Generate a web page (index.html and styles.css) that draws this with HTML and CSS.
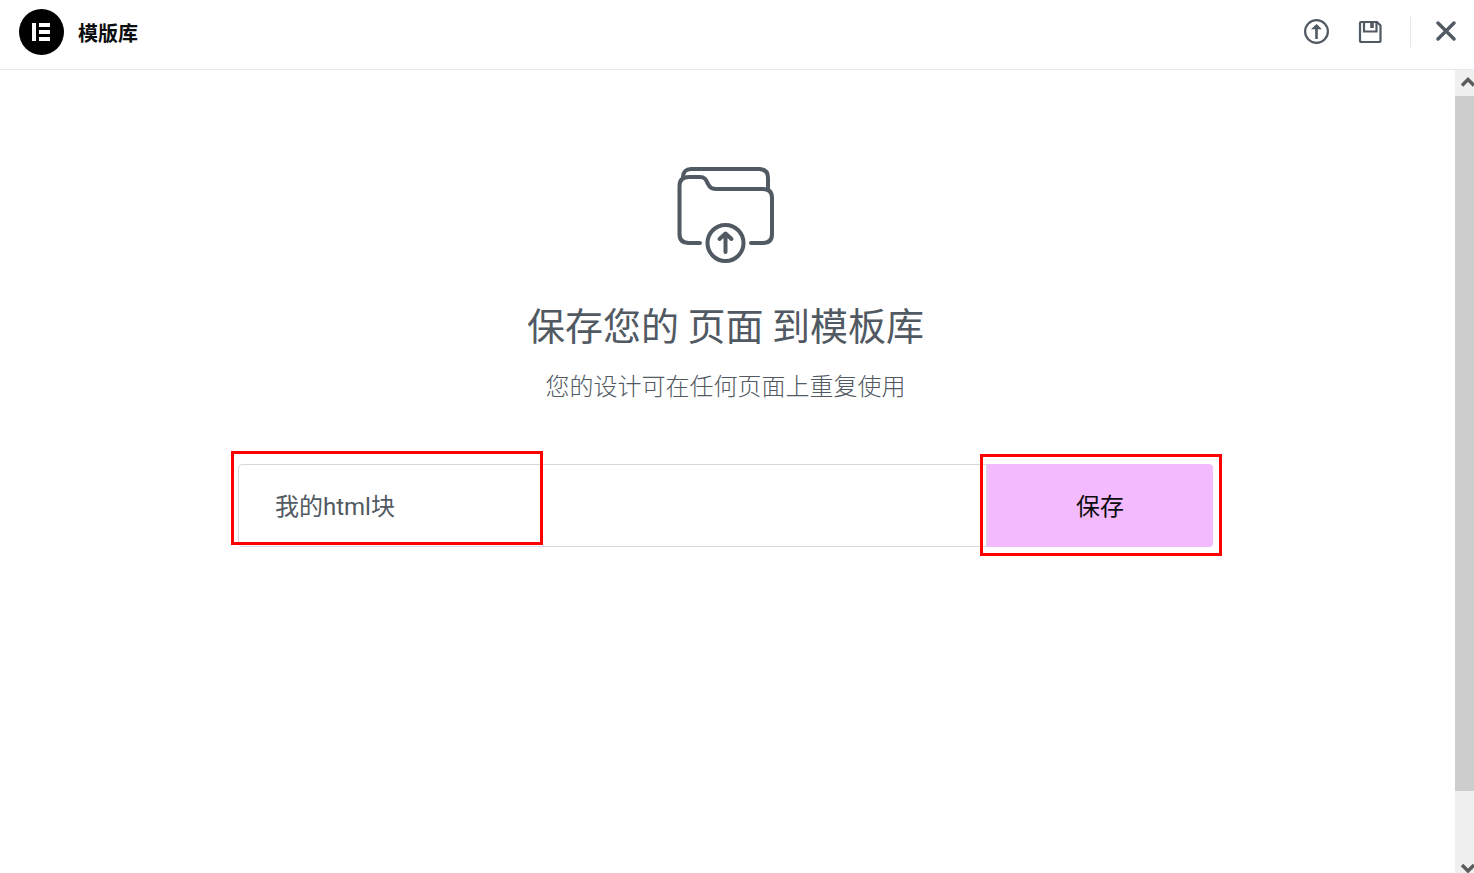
FILE: index.html
```html
<!DOCTYPE html>
<html lang="zh-CN">
<head>
<meta charset="utf-8">
<title>模版库</title>
<meta name="viewport" content="width=device-width, initial-scale=1">
<link rel="stylesheet" href="styles.css">
</head>
<body>
<header class="header">
  <div class="brand">
    <svg class="brand-logo" viewBox="0 0 45 46" aria-hidden="true">
      <ellipse cx="22.5" cy="23" rx="22.5" ry="23" fill="#000"/>
      <path fill="#fff" d="M13 14h4v18h-4zM20 14h11v4H20zM20 21h11v4H20zM20 28h11v4H20z"/>
    </svg>
    <h1 class="brand-title">模版库</h1>
  </div>
  <div class="actions">
    <button class="icon-button" type="button" aria-label="导入模板">
      <svg width="26" height="26" viewBox="0 0 26 26" fill="none" stroke="currentColor" stroke-width="2.2">
        <circle cx="12.5" cy="12.5" r="11.4"/>
        <path d="M12.5 20V7" stroke-width="2.6"/>
        <path d="M7 10.3 12.5 5l5.500 5.300z" fill="currentColor" stroke="none"/>
      </svg>
    </button>
    <button class="icon-button" type="button" aria-label="保存模板">
      <svg width="24" height="24" viewBox="0 0 24 24" fill="none" stroke="currentColor" stroke-width="2.2">
        <path d="M3 2H19L22.500 5.500V20.500Q22.500 22 21 22H3.500Q2 22 2 20.500V3Q2 2 3 2Z"/>
        <path d="M6 2V11.500H18.500V2"/>
        <path d="M14 2V8" stroke-width="3.600"/>
      </svg>
    </button>
    <button class="icon-button close-button" type="button" aria-label="关闭">
      <svg width="20" height="20" viewBox="0 0 20 20" fill="none" stroke="currentColor" stroke-width="3.400" stroke-linecap="round">
        <path d="M2 2 18 18M18 2 2 18"/>
      </svg>
    </button>
  </div>
</header>
<div class="body">
  <main class="content">
    <svg class="folder" width="98" height="98" viewBox="0 0 98 98" fill="none" stroke="currentColor" stroke-width="4" stroke-linecap="round" stroke-linejoin="round" aria-hidden="true">
      <path d="M6 11C6 6 9 3 14 3H82Q91 3 91 12V24"/>
      <path d="M23 77H12Q2.500 77 2.500 68V20Q2.500 11 12 11H23C28 11 29 14 31 18C33 22 35 23 40 23H86Q95 23 95 32V68Q95 77 86 77H74"/>
      <circle cx="48.500" cy="77" r="18"/>
      <path d="M48.500 86V68M42.500 73 48.500 67.500 54.500 73"/>
    </svg>
    <h2 class="title">保存您的 页面 到模板库</h2>
    <p class="subtitle">您的设计可在任何页面上重复使用</p>
    <form class="save-form">
      <input class="name-input" type="text" value="我的html块" aria-label="模板名称">
      <button class="save-button" type="button">保存</button>
      <span class="mark mark-name"></span>
      <span class="mark mark-save"></span>
    </form>
  </main>
  <div class="scrollbar" aria-hidden="true">
    <svg class="scroll-arrow" width="26" height="26" viewBox="0 0 26 26" fill="none" stroke="#5c5c5c" stroke-width="3.400"><path d="M7 15.500 13 9.500l6 6"/></svg>
    <div class="thumb"></div>
    <svg class="scroll-arrow" width="26" height="14" viewBox="0 0 26 14" fill="none" stroke="#5c5c5c" stroke-width="3.400"><path d="M7 6 13 12l6-6"/></svg>
  </div>
</div>
</body>
</html>
```
FILE: styles.css
```css
* {
  box-sizing: border-box;
}

body {
  margin: 0;
  min-height: 100vh;
  display: flex;
  flex-direction: column;
  overflow: hidden;
  background: #fff;
  color: #515962;
  font-family: Roboto, "Noto Sans CJK SC", sans-serif;
}

button,
input {
  font: inherit;
  color: inherit;
}

h1,
h2,
p {
  margin: 0;
}

.header {
  display: flex;
  justify-content: space-between;
  height: 70px;
  padding: 9px 18px 0 19px;
  border-bottom: 1px solid #e6e8ea;
}

.brand {
  display: flex;
  align-items: center;
  gap: 14px;
  height: 46px;
}

.brand-logo {
  width: 45px;
  height: 46px;
}

.brand-title {
  padding-top: 4px;
  color: #0c0d0e;
  font-size: 20px;
  line-height: 28px;
  font-weight: 700;
}

.actions {
  display: flex;
  align-items: center;
  gap: 28px;
  height: 46px;
}

.icon-button {
  display: flex;
  padding: 0;
  border: 0;
  background: none;
}

.close-button {
  align-items: center;
  height: 30px;
  padding: 0 0 2px 25px;
  border-left: 1px solid #e6e8ea;
}

.body {
  flex: 1;
  display: flex;
}

.content {
  flex: 1;
  display: flex;
  flex-direction: column;
  align-items: center;
  padding: 96px 242px 0 238px;
}

.title {
  margin-top: 32px;
  font-family: "Noto Sans CJK SC", sans-serif;
  font-size: 38px;
  line-height: 56px;
  font-weight: 400;
}

.subtitle {
  margin-top: 17px;
  font-size: 24px;
  line-height: 36px;
  font-weight: 300;
}

.save-form {
  position: relative;
  display: flex;
  width: 100%;
  height: 83px;
  margin-top: 59px;
  font-size: 24px;
}

.name-input {
  flex: 1;
  min-width: 0;
  padding: 0 36px 2px;
  border: 1px solid #d5d8dc;
  border-radius: 4px 0 0 4px;
  background: #fff;
}

.save-button {
  width: 226px;
  padding: 0 0 2px;
  border: 0;
  border-radius: 0 4px 4px 0;
  background: #f3bafd;
  color: #0c0d0e;
}

.mark {
  position: absolute;
  border: 3px solid #f00;
  pointer-events: none;
}

.mark-name {
  top: -13px;
  left: -7px;
  width: 312px;
  height: 94px;
}

.mark-save {
  top: -10px;
  right: -9px;
  width: 242px;
  height: 102px;
}

.scrollbar {
  display: flex;
  flex-direction: column;
  justify-content: space-between;
  width: 19px;
  overflow: hidden;
  background: #f0f0f0;
}

.scroll-arrow {
  flex: none;
}

.thumb {
  flex: 0 0 auto;
  height: calc(100vh - 178px);
  margin-bottom: auto;
  background: #cdcdcd;
}
```
